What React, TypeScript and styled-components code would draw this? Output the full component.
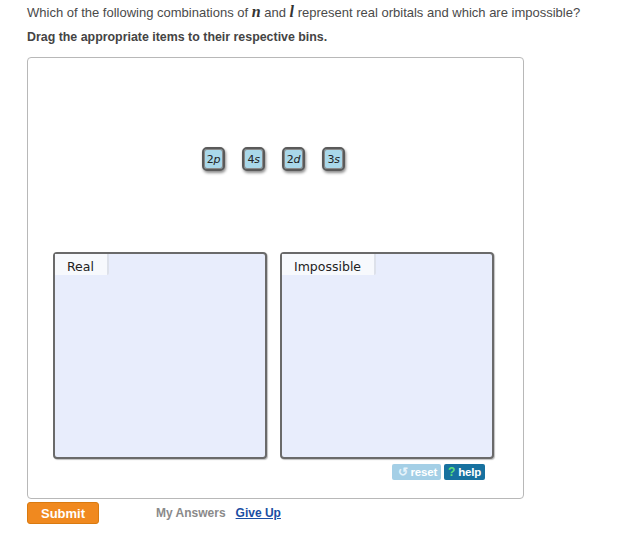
import React from 'react';
import styled, { createGlobalStyle } from 'styled-components';

const Global = createGlobalStyle`
  body {
    margin: 0;
    background: #fff;
    font-family: 'Liberation Sans', Arial, sans-serif;
  }
`;

const Page = styled.div`
  padding: 4px 0 0 27px;
  width: 592px;
`;

const Question = styled.p`
  margin: 0;
  font-size: 13px;
  line-height: 15px;
  color: #4a4a4a;
`;

const MathVar = styled.i`
  font-family: 'Liberation Serif', 'Times New Roman', serif;
  font-size: 16px;
  font-weight: bold;
  color: #333;
`;

const Instruction = styled.p`
  margin: 10px 0 0;
  font-size: 12.4px;
  line-height: 15px;
  font-weight: bold;
  color: #444;
`;

const Board = styled.div`
  margin-top: 12px;
  width: 495px;
  height: 440px;
  border: 1px solid #b8b8b8;
  border-radius: 4px;
  display: flex;
  flex-direction: column;
  align-items: stretch;
`;

const TileRow = styled.div`
  display: flex;
  justify-content: center;
  gap: 17px;
  margin-top: 89px;
  padding-right: 4px;
`;

const Tile = styled.div`
  width: 17px;
  height: 18px;
  border: 2px solid #5a5a5a;
  border-radius: 5px;
  background: #a9d8ea;
  box-shadow: 1px 2px 3px rgba(0, 0, 0, 0.45), inset 0 0 0 1px #8a8a8a;
  padding: 1px;
  box-sizing: content-box;
  display: flex;
  align-items: center;
  justify-content: center;
  font-family: 'DejaVu Sans', Verdana, sans-serif;
  font-size: 11px;
  letter-spacing: -0.3px;
  color: #222;
`;

const BinRow = styled.div`
  display: flex;
  gap: 13px;
  margin-top: 81px;
  padding-left: 25px;
`;

const Bin = styled.div`
  width: 210px;
  height: 203px;
  border: 2px solid #6a6a6a;
  border-radius: 4px;
  background: #e8edfc;
  box-shadow: 1px 1px 1px rgba(0, 0, 0, 0.25);
`;

const BinLabel = styled.div`
  display: inline-block;
  height: 21px;
  line-height: 26px;
  padding: 0 13px 0 12px;
  background: #f7f9fd;
  border-right: 2px solid #dde1ea;
  border-bottom-right-radius: 2px;
  font-family: 'DejaVu Sans', Verdana, sans-serif;
  font-size: 12.5px;
  color: #222;
`;

const Tools = styled.div`
  display: flex;
  justify-content: flex-end;
  gap: 3px;
  margin-top: 5px;
  padding-right: 38px;
`;

const ToolButton = styled.div<{ $dim?: boolean }>`
  height: 16px;
  padding: ${(p) => (p.$dim ? '0 4px 0 6px' : '0 4px 0 4px')};
  display: flex;
  align-items: center;
  gap: 3px;
  background: ${(p) => (p.$dim ? '#a4cfe6' : '#17719f')};
  border-radius: 2px;
  color: #fff;
  font-size: 11.5px;
  font-weight: bold;
  letter-spacing: -0.2px;
`;

const Glyph = styled.span<{ $green?: boolean }>`
  color: ${(p) => (p.$green ? '#5fe07a' : '#e6f3fb')};
  font-size: 12px;
  font-weight: bold;
`;

const Footer = styled.div`
  display: flex;
  align-items: center;
  margin-top: 3px;
`;

const Submit = styled.button`
  width: 72px;
  height: 22px;
  border: 1px solid #d97a10;
  border-radius: 3px;
  background: #f0891f;
  color: #fff;
  font-family: 'Liberation Sans', Arial, sans-serif;
  font-size: 13px;
  font-weight: bold;
  padding: 0;
`;

const Muted = styled.span`
  margin-left: 57px;
  font-size: 12px;
  font-weight: bold;
  color: #8a8a8a;
`;

const GiveUp = styled.a`
  margin-left: 10px;
  font-size: 12px;
  font-weight: bold;
  color: #1b4ea3;
  text-decoration: underline;
`;

const tiles = [
  ['2', 'p'],
  ['4', 's'],
  ['2', 'd'],
  ['3', 's']
];

export default function App() {
  return (
    <>
      <Global />
      <Page>
        <Question>
          Which of the following combinations of <MathVar>n</MathVar> and <MathVar>l</MathVar>{' '}
          represent real orbitals and which are impossible?
        </Question>
        <Instruction>Drag the appropriate items to their respective bins.</Instruction>
        <Board>
          <TileRow>
            {tiles.map(([n, l]) => (
              <Tile key={n + l}>
                {n}
                <i>{l}</i>
              </Tile>
            ))}
          </TileRow>
          <BinRow>
            <Bin>
              <BinLabel>Real</BinLabel>
            </Bin>
            <Bin>
              <BinLabel>Impossible</BinLabel>
            </Bin>
          </BinRow>
          <Tools>
            <ToolButton $dim>
              <Glyph>↺</Glyph>reset
            </ToolButton>
            <ToolButton>
              <Glyph $green>?</Glyph>help
            </ToolButton>
          </Tools>
        </Board>
        <Footer>
          <Submit>Submit</Submit>
          <Muted>My Answers</Muted>
          <GiveUp href="#">Give Up</GiveUp>
        </Footer>
      </Page>
    </>
  );
}
